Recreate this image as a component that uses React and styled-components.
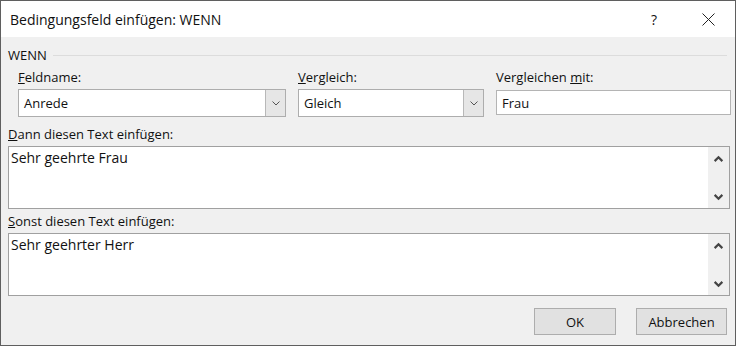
import React from "react";
import styled, { createGlobalStyle } from "styled-components";

const GlobalStyle = createGlobalStyle`
  html, body {
    margin: 0;
    padding: 0;
    background: #fff;
  }
  * {
    box-sizing: border-box;
  }
`;

const Window = styled.div`
  width: 736px;
  height: 346px;
  border: 1px solid #5f5f5f;
  background: #f0f0f0;
  font-family: "Open Sans", "Noto Sans", sans-serif;
  font-size: 13px;
  color: #111;
  display: flex;
  flex-direction: column;
`;

const TitleBar = styled.div`
  height: 36px;
  background: #fff;
  display: flex;
  align-items: center;
  padding: 0 0 0 9px;
  font-size: 14px;
  color: #111;
`;

const Title = styled.div`
  flex: 1;
`;

const TitleButton = styled.div`
  width: 54px;
  height: 36px;
  display: flex;
  align-items: center;
  justify-content: center;
  font-size: 14px;
`;

const Body = styled.div`
  flex: 1;
  padding: 8px 7px 0 7px;
  display: flex;
  flex-direction: column;
`;

const GroupHeader = styled.div`
  display: flex;
  align-items: center;
  gap: 6px;
  height: 20px;
  &::after {
    content: "";
    flex: 1;
    height: 1px;
    background: #dcdcdc;
    margin-right: 1px;
  }
`;

const FieldsRow = styled.div`
  display: grid;
  grid-template-columns: 268px 186px 235px;
  column-gap: 12px;
  padding-left: 10px;
  margin-top: 3px;
`;

const Field = styled.div`
  display: flex;
  flex-direction: column;
`;

const Label = styled.div`
  height: 18px;
  line-height: 18px;
  margin-bottom: 3px;
`;

const Combo = styled.div`
  height: 28px;
  background: #fff;
  border: 1px solid #adadad;
  display: flex;
  align-items: center;
`;

const ComboText = styled.div`
  flex: 1;
  padding-left: 5px;
`;

const DropButton = styled.div`
  width: 20px;
  height: 26px;
  background: #e6e6e6;
  border-left: 1px solid #b8b8b8;
  display: flex;
  align-items: center;
  justify-content: center;
  color: #555;
`;

const TextInput = styled.div`
  height: 25px;
  margin-top: 1px;
  background: #fff;
  border: 1px solid #b4b4b4;
  display: flex;
  align-items: center;
  padding-left: 5px;
`;

const AreaLabel = styled(Label)`
  margin-top: ${(p) => p.$top}px;
  margin-bottom: 3px;
`;

const TextArea = styled.div`
  height: 63px;
  width: 722px;
  background: #fff;
  border: 1px solid #a0a0a0;
  display: flex;
`;

const AreaText = styled.div`
  flex: 1;
  padding: 1px 2px;
  font-size: 14px;
`;

const ScrollBar = styled.div`
  width: 21px;
  background: #f0f0f0;
  display: flex;
  flex-direction: column;
  justify-content: space-between;
  align-items: center;
  padding: 7px 0 6px;
  color: #444;
`;

const Footer = styled.div`
  display: flex;
  justify-content: flex-end;
  gap: 20px;
  margin-top: 12px;
  padding-right: 1px;
`;

const Button = styled.div`
  width: ${(p) => p.$w}px;
  height: 27px;
  background: #e1e1e1;
  border: 1px solid #adadad;
  display: flex;
  align-items: center;
  justify-content: center;
`;

const Chevron = ({ up, size = 10, stroke = 1.4 }) => (
  <svg width={size} height={size} viewBox="0 0 10 10">
    <path
      d={up ? "M1.5 6.5 L5 3 L8.5 6.5" : "M1.5 3.5 L5 7 L8.5 3.5"}
      fill="none"
      stroke="currentColor"
      strokeWidth={stroke}
    />
  </svg>
);

const CloseIcon = () => (
  <svg width="13" height="13" viewBox="0 0 13 13">
    <path d="M0.5 0.5 L12.5 12.5 M12.5 0.5 L0.5 12.5" stroke="#222" strokeWidth="1" />
  </svg>
);

const Area = ({ text }) => (
  <TextArea>
    <AreaText>{text}</AreaText>
    <ScrollBar>
      <Chevron up size={11} stroke={2} />
      <Chevron size={11} stroke={2} />
    </ScrollBar>
  </TextArea>
);

export default function App() {
  return (
    <>
      <GlobalStyle />
      <Window>
        <TitleBar>
          <Title>Bedingungsfeld einfügen: WENN</Title>
          <TitleButton>?</TitleButton>
          <TitleButton>
            <CloseIcon />
          </TitleButton>
        </TitleBar>
        <Body>
          <GroupHeader>WENN</GroupHeader>
          <FieldsRow>
            <Field>
              <Label>
                <u>F</u>eldname:
              </Label>
              <Combo>
                <ComboText>Anrede</ComboText>
                <DropButton>
                  <Chevron size={10} stroke={1} />
                </DropButton>
              </Combo>
            </Field>
            <Field>
              <Label>
                <u>V</u>ergleich:
              </Label>
              <Combo>
                <ComboText>Gleich</ComboText>
                <DropButton>
                  <Chevron size={10} stroke={1} />
                </DropButton>
              </Combo>
            </Field>
            <Field>
              <Label>
                Vergleichen <u>m</u>it:
              </Label>
              <TextInput>Frau</TextInput>
            </Field>
          </FieldsRow>
          <AreaLabel $top={8}>
            <u>D</u>ann diesen Text einfügen:
          </AreaLabel>
          <Area text="Sehr geehrte Frau" />
          <AreaLabel $top={3}>
            <u>S</u>onst diesen Text einfügen:
          </AreaLabel>
          <Area text="Sehr geehrter Herr" />
          <Footer>
            <Button $w={82}>OK</Button>
            <Button $w={91}>Abbrechen</Button>
          </Footer>
        </Body>
      </Window>
    </>
  );
}
